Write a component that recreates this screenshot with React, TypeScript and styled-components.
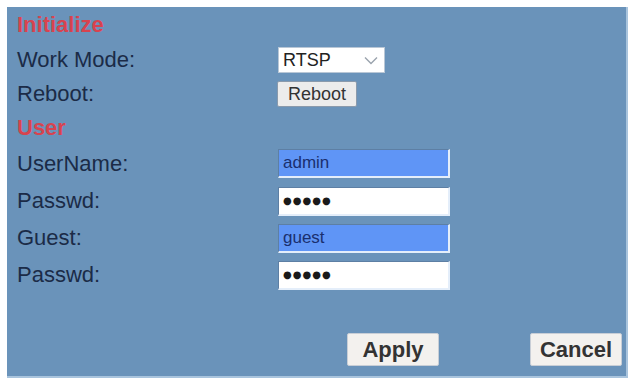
import React from "react";
import styled, { createGlobalStyle } from "styled-components";

const Global = createGlobalStyle`
  html, body { margin: 0; padding: 0; background: #ffffff; }
  body { font-family: "Liberation Sans", Arial, sans-serif; }
`;

const Panel = styled.div`
  box-sizing: border-box;
  margin: 7px 0 0 7px;
  width: 621px;
  height: 371px;
  background: #6a93ba;
  border-right: 2px solid #a9c4dd;
  border-bottom: 2px solid #a9c4dd;
  padding: 0 4px 0 10px;
  display: flex;
  flex-direction: column;
`;

const Row = styled.div<{ $h: number }>`
  display: grid;
  grid-template-columns: 261px 1fr;
  align-items: center;
  height: ${(p) => p.$h}px;
`;

const Heading = styled.div`
  font-size: 22px;
  font-weight: bold;
  color: #d8434f;
  line-height: 1;
`;

const Label = styled.div`
  font-size: 22px;
  color: #1b2b47;
  line-height: 1;
`;

const Select = styled.div`
  box-sizing: border-box;
  width: 107px;
  height: 26px;
  background: #ffffff;
  border: 1px solid #b9c7d6;
  display: flex;
  align-items: center;
  justify-content: space-between;
  padding: 0 6px 0 4px;
  font-size: 18px;
  color: #222;
`;

const SmallButton = styled.button`
  box-sizing: border-box;
  width: 80px;
  height: 26px;
  margin-left: -1px;
  background: #ececec;
  border: 1px solid #8a9aac;
  border-radius: 2px;
  font-family: "Liberation Sans", Arial, sans-serif;
  font-size: 18px;
  color: #333;
  padding: 0;
`;

const TextInput = styled.input<{ $filled?: boolean }>`
  box-sizing: border-box;
  width: 172px;
  height: 29px;
  background: ${(p) => (p.$filled ? "#5f95f6" : "#ffffff")};
  border-style: solid;
  border-width: 1px 2px 2px 1px;
  border-color: #5d7fa4 #e4eefa #e4eefa #5d7fa4;
  padding: 0 0 0 4px;
  font-family: "Liberation Sans", Arial, sans-serif;
  font-size: 17px;
  color: #1a2f6e;
  outline: none;
`;

const Dots = styled(TextInput)`
  font-family: "DejaVu Sans", sans-serif;
  font-size: 10px;
  letter-spacing: 1px;
  color: #1a1a1a;
`;

const ButtonBar = styled.div`
  margin-top: auto;
  margin-bottom: 10px;
  display: flex;
  justify-content: flex-end;
  gap: 91px;
`;

const BigButton = styled.button`
  box-sizing: border-box;
  width: 92px;
  height: 33px;
  background: #f3f1ee;
  border: 1px solid #c8ced6;
  border-radius: 2px;
  font-family: "Liberation Sans", Arial, sans-serif;
  font-size: 22px;
  font-weight: bold;
  color: #333;
  padding: 0;
`;

const Chevron = () => (
  <svg width="14" height="9" viewBox="0 0 14 9">
    <path d="M1 1.5 L7 7.5 L13 1.5" fill="none" stroke="#9aa3ad" strokeWidth="1.4" />
  </svg>
);

export default function App() {
  return (
    <>
      <Global />
      <Panel>
        <Row $h={36}>
          <Heading>Initialize</Heading>
        </Row>
        <Row $h={34}>
          <Label>Work Mode:</Label>
          <Select>
            <span>RTSP</span>
            <Chevron />
          </Select>
        </Row>
        <Row $h={34}>
          <Label>Reboot:</Label>
          <div>
            <SmallButton>Reboot</SmallButton>
          </div>
        </Row>
        <Row $h={34}>
          <Heading>User</Heading>
        </Row>
        <Row $h={37}>
          <Label>UserName:</Label>
          <TextInput $filled defaultValue="admin" />
        </Row>
        <Row $h={38}>
          <Label>Passwd:</Label>
          <Dots readOnly defaultValue="●●●●●" />
        </Row>
        <Row $h={36}>
          <Label>Guest:</Label>
          <TextInput $filled defaultValue="guest" />
        </Row>
        <Row $h={38}>
          <Label>Passwd:</Label>
          <Dots readOnly defaultValue="●●●●●" />
        </Row>
        <ButtonBar>
          <BigButton>Apply</BigButton>
          <BigButton>Cancel</BigButton>
        </ButtonBar>
      </Panel>
    </>
  );
}
